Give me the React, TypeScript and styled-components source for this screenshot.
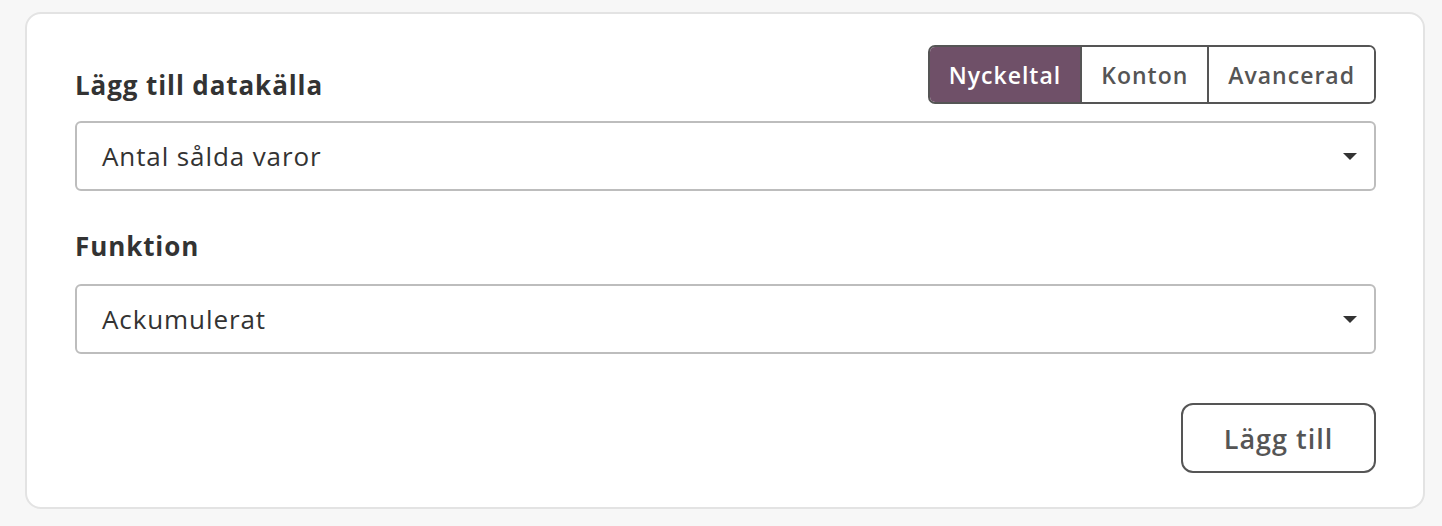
import React, { FC, useState } from 'react';
import styled, { createGlobalStyle } from 'styled-components';

const GlobalStyle = createGlobalStyle`
    body {
        margin: 0;
        background-color: #f7f7f7;
        font-family: "Open Sans", Lato, sans-serif;
    }
`;

const Page = styled.div`
    padding: 12px 17px 19px 25px;
`;

const Card = styled.div`
    display: flex;
    flex-direction: column;
    background-color: #fff;
    border: 2px solid #e3e3e3;
    border-radius: 16px;
    padding: 31px 47px 34px 48px;
`;

const HeaderRow = styled.div`
    display: flex;
    align-items: center;
    justify-content: space-between;
    margin-bottom: 17px;
`;

const Label = styled.div`
    font-size: 26px;
    font-weight: bold;
    letter-spacing: 0.9px;
    color: #333;
    line-height: 30px;
`;

const Title = styled(Label)`
    padding-top: 21px;
`;

const Segmented = styled.div`
    display: flex;
    border: 2px solid #555;
    border-radius: 7px;
    overflow: hidden;
    height: 59px;
    box-sizing: border-box;
`;

const Segment = styled.button<{ active: boolean }>`
    border: none;
    border-left: ${props => props.active ? 'none' : '2px solid #555'};
    &:first-child { border-left: none; }
    background-color: ${props => props.active ? '#6f5068' : '#fff'};
    color: ${props => props.active ? '#fff' : '#555'};
    font-family: inherit;
    font-size: 23px;
    font-weight: 600;
    letter-spacing: 1px;
    padding: 0 19px;
    cursor: pointer;
`;

const Select = styled.div`
    display: flex;
    align-items: center;
    justify-content: space-between;
    height: 70px;
    box-sizing: border-box;
    border: 2px solid #bdbdbd;
    border-radius: 6px;
    padding: 0 17px 0 25px;
    font-size: 26px;
    letter-spacing: 0.9px;
    color: #333;
`;

const Caret = styled.span`
    width: 0;
    height: 0;
    border-left: 7px solid transparent;
    border-right: 7px solid transparent;
    border-top: 7px solid #333;
`;

const FieldLabel = styled(Label)`
    margin: 40px 0 23px;
`;

const Footer = styled.div`
    display: flex;
    justify-content: flex-end;
    margin-top: 49px;
`;

const Button = styled.button`
    width: 195px;
    height: 70px;
    border: 2px solid #555;
    border-radius: 12px;
    background: #fff;
    color: #555;
    font-family: inherit;
    font-size: 27px;
    font-weight: 600;
    letter-spacing: 1px;
    cursor: pointer;
`;

const tabs = ['Nyckeltal', 'Konton', 'Avancerad'];

const App: FC = () => {
    const [tab, setTab] = useState('Nyckeltal');

    return (
        <>
            <GlobalStyle />
            <Page>
                <Card>
                    <HeaderRow>
                        <Title>Lägg till datakälla</Title>
                        <Segmented>
                            {tabs.map(t => (
                                <Segment key={t} active={t === tab} onClick={() => setTab(t)}>{t}</Segment>
                            ))}
                        </Segmented>
                    </HeaderRow>
                    <Select>
                        Antal sålda varor
                        <Caret />
                    </Select>
                    <FieldLabel>Funktion</FieldLabel>
                    <Select>
                        Ackumulerat
                        <Caret />
                    </Select>
                    <Footer>
                        <Button>Lägg till</Button>
                    </Footer>
                </Card>
            </Page>
        </>
    );
};

export default App;
